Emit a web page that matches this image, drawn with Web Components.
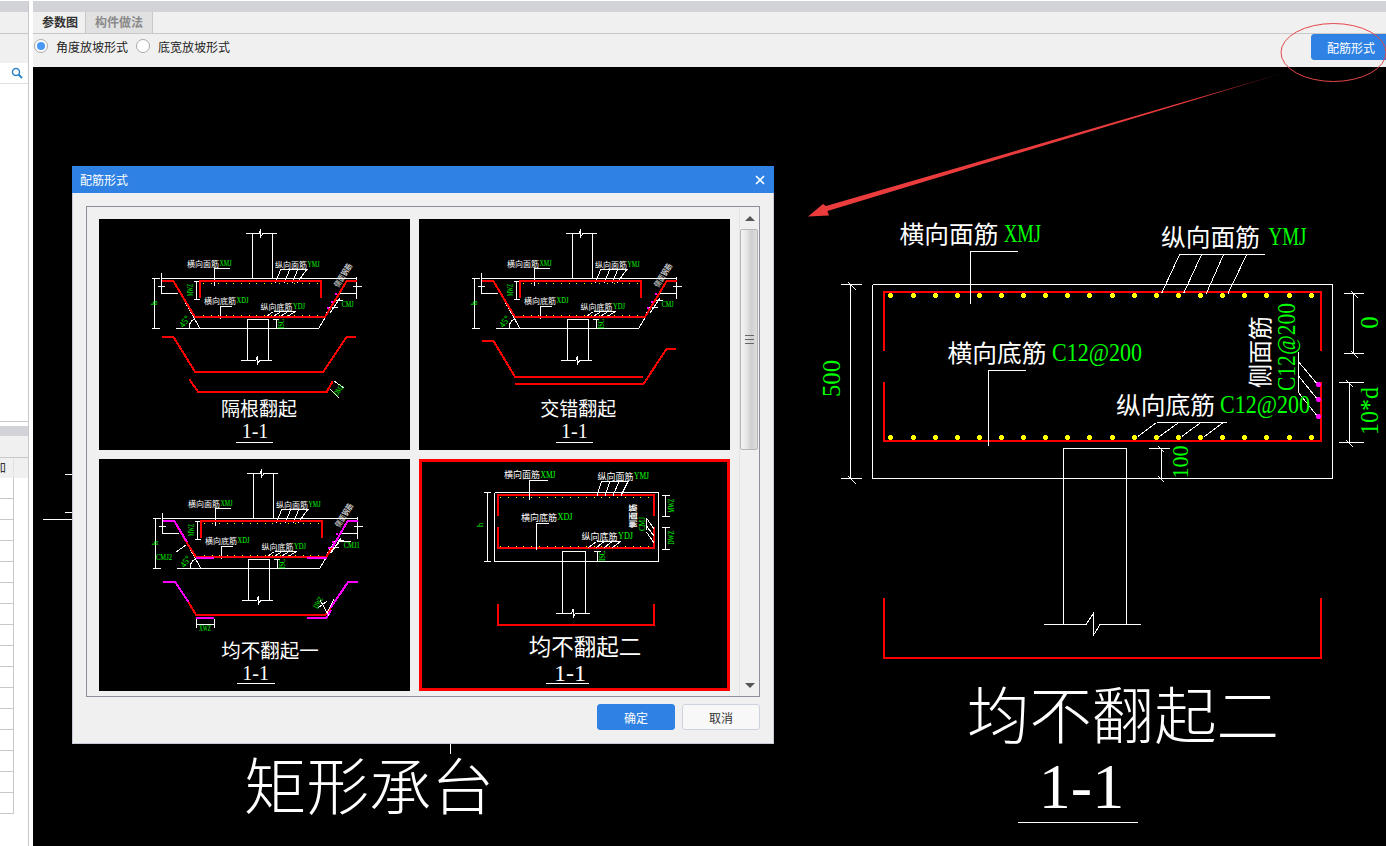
<!DOCTYPE html>
<html lang="zh">
<head>
<meta charset="utf-8">
<title>配筋形式</title>
<style>
  html, body { margin: 0; height: 846px; overflow: hidden; background: #fff; }
  body { font: 12px "Noto Sans CJK SC", sans-serif; color: #333; }
</style>
</head>
<body>
<app-shell>
  <side-panel slot="side"></side-panel>
  <work-pane slot="main">
    <rebar-dialog heading="配筋形式">
      <cad-thumb kind="alternate" heading="隔根翻起"></cad-thumb>
      <cad-thumb kind="staggered" heading="交错翻起"></cad-thumb>
      <cad-thumb kind="flat-one" heading="均不翻起一"></cad-thumb>
      <cad-thumb kind="flat-two" heading="均不翻起二" selected></cad-thumb>
    </rebar-dialog>
  </work-pane>
</app-shell>

<script>
// small svg helpers, coordinates are the page ones
const CN = '"Noto Sans CJK SC", sans-serif';
const EN = '"Liberation Serif", serif';
const WHITE = '#fff', RED = '#f00', GREEN = '#0f0', PINK = '#f0f', YELLOW = '#ff0';

function pl(points, color = WHITE, width = 1) {
  return `<polyline points="${points}" fill="none" stroke="${color}" stroke-width="${width}"/>`;
}
function txt(x, y, str, o = {}) {
  const size = o.size || 8, fill = o.fill || WHITE, family = o.family || CN;
  const fit = o.len ? `textLength="${o.len}" lengthAdjust="spacingAndGlyphs"` : '';
  const anchor = o.anchor || 'start';
  const rot = o.rot ? ` rotate(${o.rot})` : '';
  return `<text transform="translate(${x} ${y})${rot}" font-size="${size}" fill="${fill}" font-family='${family}' text-anchor="${anchor}" dominant-baseline="central" ${o.weight ? `font-weight="${o.weight}"` : ''} ${fit}>${str}</text>`;
}
function label(x, y, cn, en, size, cnW, gap, enW) {
  return txt(x, y, cn, { size, len: cnW }) +
    txt(x + cnW + gap, y, en, { size: size * 1.05, fill: GREEN, family: EN, len: enW });
}
function dots(x0, x1, step, y, color, s = 1) {
  let out = '';
  for (let x = x0; x <= x1; x += step) out += `<rect x="${x}" y="${y}" width="${s}" height="${s}" fill="${color}"/>`;
  return out;
}
// rebar mark on the big section, a small plus
function mark(x, y, color) {
  const cx = Math.round(x), cy = Math.round(y);
  return `<rect x="${cx - 2}" y="${cy - 1}" width="5" height="3" fill="${color}"/><rect x="${cx - 1}" y="${cy - 2}" width="3" height="5" fill="${color}"/>`;
}
function green(x, y, str, rot, len, size = 8) {
  return txt(x, y, str, { size, fill: GREEN, family: EN, anchor: 'middle', rot, len });
}

// the section with the sloped pit, same in the first three tiles
function pitSection(pink) {
  let s = '';
  s += pl('252,278 252,233.5') + pl('272.7,278 272.7,233.5');
  s += pl('246,233.5 259,233.5 260.5,229.5 260.5,237 263,233.5 277,233.5');
  s += pl('161.5,278.5 357,278.5');
  s += pl('173.3,281 200,328.5') + pl('176,328.5 318.7,328.5 346.7,281');
  s += pl('154.5,278.5 154.5,328.5') + pl('152,278.5 159.5,278.5') + pl('152,328.5 159.5,328.5');
  s += pl('161.5,273 161.5,293.5 178,293.5') + pl('158,286 165,286');
  s += pl('356.5,277 356.5,298.5') + pl('338,293.5 356.5,293.5') + pl('353,286 361.5,286');
  s += pl('196.5,281 196.5,299') + pl('194,281 200,281') + pl('194,299 200,299');
  s += pl('247.5,360 247.5,319.5 268.5,319.5 268.5,360');
  s += pl('241,360 256,360 257.5,356 257.5,364 260,360 272,360');
  s += pl('276,319.5 276,328.5') + pl('273,319.5 279,319.5');
  s += `<path d="M189,328.5 A11,11 0 0 1 194,319" fill="none" stroke="#fff"/>`;
  s += pl('214,286 214,268.5 230,268.5');
  s += pl('281,269 307.5,269') + pl('281,269 275,283') + pl('290,269 284,283') + pl('298,269 292,283') + pl('307,269 297,283');
  s += pl('220,318.5 220,306.5 231.5,306.5');
  s += pl('273.5,311.5 295.5,311.5') + pl('273.5,311.5 267,316') + pl('281,311.5 274,316') + pl('288,311.5 281,316') + pl('295.5,311.5 288,316');
  s += pl('343,300 335,300 326,314') + pl('340,298 330,313') + pl('338,307 328,307');
  s += pl('200,298 200,281 321,281 321,298', RED, 2);
  if (!pink) {
    s += pl('161.7,281 173.3,281 195,317 325,317 346.7,281 356.7,281', RED, 2);
  } else {
    s += pl('195,317 325,317', RED, 2);
    s += pl('173.3,281 186,303 195,317', RED, 2) + pl('161.7,281 173.3,281 186,302', PINK, 2);
    s += pl('325,317 331,308', RED, 2) + pl('331,308 346.7,281 357,281', PINK, 2);
  }
  s += dots(203, 320, 7.6, 282.5, YELLOW) + dots(203, 320, 7.6, 314.5, YELLOW);
  s += dots(335, 335, 1, 293, PINK, 2) + dots(331, 331, 1, 301, PINK, 2) + dots(327, 327, 1, 307, PINK, 2);
  s += label(187, 263.5, '横向面筋', 'XMJ', 8, 32, 0.5, 12);
  s += label(275, 264.5, '纵向面筋', 'YMJ', 8, 32, 0.5, 12);
  s += label(204, 300, '横向底筋', 'XDJ', 8, 32, 0.5, 12);
  s += label(260.5, 306, '纵向底筋', 'YDJ', 8, 32, 0.5, 12);
  s += txt(342.5, 275, '侧面钢筋', { size: 8, anchor: 'middle', rot: -58, len: 26 });
  s += green(154.5, 303, 'h', -90);
  s += green(189.5, 290, 'MWZ', -90, 12, 9);
  s += green(281.5, 324, 'ISC', -90, 10);
  s += green(184.5, 321.5, '45°', -55, 12, 9);
  return s;
}

const DRAW = {
  alternate() {
    return { box: '99 219 311 231', body: pitSection(false) +
      pl('162.3,336.7 173.3,336.7 195,371.7 323.3,371.7 346.7,336.7 356,336.7', RED, 2) +
      pl('189.3,379.3 198.3,392 326.7,392 332.7,381.3', RED, 2) +
      pl('334,381 344,388') + pl('330,389 339,398') +
      green(339, 390, 'DMZ', -55, 12, 8) +
      green(347.7, 304.7, 'CMJ', 0, 12) +
      txt(259, 407, '隔根翻起', { size: 19, anchor: 'middle' }) +
      txt(255, 431, '1-1', { size: 20, family: EN, anchor: 'middle' }) +
      pl('236,442.5 273,442.5') };
  },
  staggered() {
    return { box: '99 219 311 231', body: pitSection(false) +
      pl('162.3,340.7 173.3,340.7 195,376.7 322.7,376.7', RED, 2) +
      pl('195,383.7 323.7,383.7 346.7,348.7 355.7,348.7', RED, 2) +
      green(347.7, 304.7, 'CMJ', 0, 12) +
      txt(258.3, 407, '交错翻起', { size: 19, anchor: 'middle' }) +
      txt(254.3, 431, '1-1', { size: 20, family: EN, anchor: 'middle' }) +
      pl('236,442.5 272.7,442.5') };
  },
  flatOne() {
    return { box: '99 459 311 232', body: `<g transform="translate(1 240)">${pitSection(true)}</g>` +
      pl('196,557.5 214,557.5', PINK, 2) + pl('307.3,557.5 326.7,557.5', PINK, 2) +
      pl('163.3,581.7 175,581.7 188.3,601.7', PINK, 2) + pl('188.3,601.7 196,615 325,615 330.7,607.7', RED, 2) +
      pl('330.7,607.7 348.3,581.7 357.7,581.7', PINK, 2) +
      pl('196,617.7 214,617.7', PINK, 2) + pl('307.3,617.7 326.7,617.7 331,610', PINK, 2) +
      pl('196,624.5 214,624.5') + pl('196,619 196,628') + pl('214,619 214,628') +
      pl('320,600 329,616') + pl('318,608 327,601') + pl('327,613 334,599') +
      pl('176,552 186,545') + pl('351,541 340,541 330,553') +
      green(205, 628.5, 'XWZ', 0, 12) + green(318.3, 602.7, 'DWZ', -60, 12) +
      green(164, 557.7, 'CMJ2', 0, 16) + green(351.7, 545.7, 'CMJ1', 0, 16) +
      txt(270, 649, '均不翻起一', { size: 19.5, anchor: 'middle' }) +
      txt(255.7, 673.3, '1-1', { size: 20, family: EN, anchor: 'middle' }) +
      pl('236.7,683.5 275,683.5') };
  },
  flatTwo() {
    return { box: '419 459 311 232', body:
      pl('494.5,492.5 658.5,492.5 658.5,561.5 494.5,561.5 494.5,492.5') +
      pl('497.7,516 497.7,495 654.3,495 654.3,516', RED, 2) +
      pl('497.7,527 497.7,548 654.3,548 654.3,527', RED, 2) +
      pl('497.7,604 497.7,625 654.3,625 654.3,604', RED, 2) +
      dots(500, 654, 7.8, 496.5, YELLOW) + dots(500, 654, 7.8, 546, YELLOW) +
      pl('562.5,613.5 562.5,551.5 585.5,551.5 585.5,613.5') +
      pl('556,613.5 571.5,613.5 573,609 573,617.5 575.5,613.5 589.5,613.5') +
      pl('487.5,492.5 487.5,561.5') + pl('484,492.5 491,492.5') + pl('484,561.5 491,561.5') +
      pl('665.5,495 665.5,516') + pl('662,495 670,495') + pl('662,516 670,516') +
      pl('665.5,527 665.5,549.5') + pl('662,527 670,527') + pl('662,549.5 670,549.5') +
      pl('529,500 529,480.5 547.5,480.5') +
      pl('601.5,481.5 628.5,481.5') + pl('601.5,481.5 597,495.5') + pl('610,481.5 605,495.5') + pl('619,481.5 613,495.5') + pl('628,481.5 621,495.5') +
      pl('536.5,549.5 536.5,523.5 549,523.5') +
      pl('596.5,541.5 620.5,541.5') + pl('596.5,541.5 588,548') + pl('604,541.5 596,548') + pl('612,541.5 604,548') + pl('620.5,541.5 612,548') +
      pl('597.5,551.5 597.5,561.5') + pl('594,551.5 601,551.5') +
      pl('646.5,518 646.5,530') + pl('646.5,518 654,529') + pl('646.5,526 654,536') + pl('646.5,532 654,543') +
      label(504, 474.5, '横向面筋', 'XMJ', 9, 36, 0.5, 15) +
      label(597.5, 476, '纵向面筋', 'YMJ', 9, 36, 0.5, 15) +
      label(521, 517, '横向底筋', 'XDJ', 9, 36, 0.5, 15) +
      label(581.5, 536, '纵向底筋', 'YDJ', 9, 36, 0.5, 15) +
      txt(632.5, 516, '侧面筋', { size: 8, anchor: 'middle', rot: -90, weight: 'bold', len: 24 }) +
      green(642, 524, 'CMJ', -90, 14, 9) + green(480, 525, 'h', -90, 0, 9) +
      green(671, 505.7, 'MWZ', -90, 14, 9) + green(671, 537.7, 'DWZ', -90, 14, 9) +
      green(602.5, 556, 'ISC', -90, 10, 8) +
      txt(585, 644.5, '均不翻起二', { size: 22.5, anchor: 'middle' }) +
      txt(570, 673, '1-1', { size: 24, family: EN, anchor: 'middle' }) +
      pl('546,683.5 589,683.5') };
  }
};

// big section to the right of the dialog
function bigSheet() {
  let s = '';
  s += pl('872.5,284.5 1332.5,284.5 1332.5,478.5 872.5,478.5 872.5,284.5');
  s += pl('884,351 884,292 1321,292 1321,351', RED, 2);
  s += pl('884,382 884,441 1321,441 1321,382', RED, 2);
  s += pl('884,598 884,658 1321,658 1321,598', RED, 2);
  for (let i = 0; i < 20; i++) {
    const x = 890.4 + i * 22.12;
    s += mark(x, 294.5, YELLOW) + mark(x, 436.5, YELLOW);
  }
  s += pl('850.5,284.5 850.5,478.5') + pl('841,284.5 861.5,284.5') + pl('841,478.5 861.5,478.5') + pl('848,282 856,290') + pl('848,476 856,484');
  s += pl('1353.5,293.5 1353.5,353.5') + pl('1343.5,293.5 1364,293.5') + pl('1343.5,353.5 1364,353.5') + pl('1351,291 1358,298') + pl('1351,351 1358,358');
  s += pl('1349,382.5 1349,442.5') + pl('1339,382.5 1364,382.5') + pl('1339,442.5 1364,442.5') + pl('1346,380 1353,387') + pl('1346,440 1353,447');
  s += pl('970.5,304 970.5,251.5 1018,251.5');
  s += pl('1179.5,254.5 1265,254.5');
  [[1179.6, 1161.5], [1201.6, 1183.5], [1223.6, 1206.3], [1246.7, 1228]].forEach(([a, b]) => { s += pl(`${a},254.5 ${b},293.5`); });
  s += pl('988.5,445.5 988.5,370.5 1026,370.5');
  s += pl('1156.5,422.5 1227,422.5');
  [[1156.5, 1137.7], [1178.8, 1159.4], [1200.9, 1181.7], [1223.2, 1204.5]].forEach(([a, b]) => { s += pl(`${a},422.5 ${b},436.5`); });
  s += pl('1298.5,352 1298.5,393');
  s += pl('1298.5,361.7 1317.5,384.3') + pl('1298.5,376 1317.5,399.3') + pl('1298.5,392.7 1317.5,416.3');
  for (const y of [384.3, 399.3, 416.3]) s += mark(1317.5, y, PINK);
  s += pl('1063.5,624.5 1063.5,448.5 1126.5,448.5 1126.5,624.5');
  s += pl('1044,624.5 1086,624.5 1093.3,613.5 1093.3,635.5 1100,624.5 1141,624.5');
  s += pl('1161,448.5 1161,478.5') + pl('1149,448.5 1170,448.5') + pl('1158,446 1164,452') + pl('1158,476 1164,482');
  s += txt(899.5, 232, '横向面筋', { size: 24, len: 99 });
  s += txt(1004, 233.5, 'XMJ', { size: 26, fill: GREEN, family: EN, len: 37 });
  s += txt(1161, 235, '纵向面筋', { size: 24, len: 99 });
  s += txt(1268.5, 236.5, 'YMJ', { size: 26, fill: GREEN, family: EN, len: 38 });
  s += txt(947.5, 351, '横向底筋', { size: 24, len: 99 });
  s += txt(1052, 352.5, 'C12@200', { size: 26, fill: GREEN, family: EN, len: 90 });
  s += txt(1116, 403, '纵向底筋', { size: 24, len: 99 });
  s += txt(1220, 404.5, 'C12@200', { size: 26, fill: GREEN, family: EN, len: 90 });
  s += txt(1258, 352, '侧面筋', { size: 24, anchor: 'middle', rot: -90, len: 72 });
  s += green(1286, 347, 'C12@200', -90, 88, 26);
  s += green(831.5, 378.5, '500', -90, 37, 25);
  s += green(1369.5, 322.5, '0', -90, 0, 25);
  s += green(1369.5, 411, '10*d', -90, 48, 25);
  s += green(1180, 462, '100', -90, 33, 24);
  s += txt(967, 712, '均不翻起二', { size: 62, len: 312, weight: 300 });
  s += txt(1081.5, 786, '1-1', { size: 64, family: EN, anchor: 'middle' });
  s += pl('1018,822.5 1138,822.5');
  // bits of the other section left of the dialog
  s += pl('65,474.5 72,474.5') + pl('65,512.5 72,512.5') + pl('43,519.5 72,519.5') + pl('450.5,744 450.5,754');
  s += txt(244, 783, '矩形承台', { size: 62, len: 250, weight: 300 });
  return s;
}

class AppShell extends HTMLElement {
  constructor() {
    super();
    this.attachShadow({ mode: 'open' }).innerHTML = `
      <style>
        :host { display: grid; grid-template-columns: 29px 4px 1fr; width: 1386px; height: 846px; position: relative; overflow: hidden; padding-top: 1px; box-sizing: border-box; }
        svg { position: absolute; left: 0; top: 0; pointer-events: none; }
      </style>
      <slot name="side"></slot><div></div><slot name="main"></slot>
      <svg width="1386" height="846" viewBox="0 0 1386 846">
        <defs><linearGradient id="fade" gradientUnits="userSpaceOnUse" x1="1290" y1="71" x2="1190" y2="101">
          <stop offset="0" stop-color="#2a0808"/><stop offset="1" stop-color="#ea3b3d"/>
        </linearGradient></defs>
        <ellipse cx="1333.5" cy="52.5" rx="52.5" ry="29" fill="none" stroke="#e4474b" stroke-width="1"/>
        <polygon points="1290,71 826,206 823,204 808,216.500 829,215.500 827.500,211" fill="url(#fade)"/>
      </svg>`;
  }
}

class SidePanel extends HTMLElement {
  constructor() {
    super();
    let rows = '';
    for (let i = 0; i < 16; i++) rows += '<div class="row"><i></i></div>';
    this.attachShadow({ mode: 'open' }).innerHTML = `
      <style>
        :host { display: flex; flex-direction: column; border-right: 1px solid #c8c8c8; background: #fff; height: 845px; overflow: hidden; }
        .cap { height: 11px; background: #d2d3d8; flex: none; }
        .tabs { height: 21px; background: #f0f0f0; border-bottom: 1px solid #c8c8c8; flex: none; }
        .tools { height: 29px; background: #f0f0f0; flex: none; }
        .search { height: 20px; border-bottom: 1px solid #e0e0e0; display: flex; justify-content: flex-end; align-items: center; padding-right: 5px; flex: none; }
        .tree { height: 337px; border-bottom: 1px solid #c8c8c8; flex: none; }
        .gap { height: 4px; flex: none; }
        .tools2 { height: 21px; background: #f0f0f0; border-bottom: 1px solid #c8c8c8; flex: none; }
        .head { height: 20px; background: #f0f0f0; display: flex; flex: none; }
        .head b { width: 13px; border-right: 1px solid #e0e0e0; font-weight: 400; font-size: 12px; line-height: 18px; overflow: hidden; white-space: nowrap; color: #333; }
        .head b span { display: block; margin-left: -6px; }
        .row { height: 20px; border-bottom: 1px solid #c8c8c8; width: 14px; box-sizing: content-box; display: flex; }
        .row i { width: 13px; border-right: 1px solid #c8c8c8; }
      </style>
      <div class="cap"></div>
      <div class="tabs"></div>
      <div class="tools"></div>
      <div class="search">
        <svg width="12" height="12" viewBox="0 0 12 12"><circle cx="5" cy="5" r="3.5" fill="none" stroke="#2e86c9" stroke-width="1.500"/><path d="M7.500 7.500 L11 11" stroke="#2e86c9" stroke-width="2"/></svg>
      </div>
      <div class="tree"></div>
      <div class="gap"></div>
      <div class="cap" style="height:10px"></div>
      <div class="tools2"></div>
      <div class="head"><b><span>加</span></b></div>
      ${rows}`;
  }
}

class TabStrip extends HTMLElement {
  constructor() {
    super();
    this.attachShadow({ mode: 'open' }).innerHTML = `
      <style>
        :host { display: flex; height: 21px; background: #f0f0f0; border-bottom: 1px solid #c8c8c8; }
        span { display: block; padding: 0 0 0 9px; line-height: 20px; font-size: 12px; font-weight: 700; box-sizing: border-box; white-space: nowrap; }
        .on { width: 53px; color: #333; border-right: 1px solid #c8c8c8; }
        .off { width: 67px; color: #8a8a8a; background: #e1e1e1; border-right: 1px solid #c8c8c8; }
      </style>
      <span class="on">参数图</span><span class="off">构件做法</span>`;
  }
}

class RadioOption extends HTMLElement {
  constructor() {
    super();
    this.attachShadow({ mode: 'open' }).innerHTML = `
      <style>
        :host { display: inline-flex; align-items: center; gap: 8px; font-size: 12px; color: #222; }
        i { width: 14px; height: 14px; box-sizing: border-box; border-radius: 50%; border: 1px solid #a9a9a9; background: #fff; display: grid; place-items: center; }
        :host([checked]) i::after { content: ""; width: 8px; height: 8px; border-radius: 50%; background: #4a9af5; }
      </style>
      <i></i><slot></slot>`;
  }
}

class UiButton extends HTMLElement {
  constructor() {
    super();
    this.attachShadow({ mode: 'open' }).innerHTML = `
      <style>
        :host { display: grid; place-items: center; width: 78px; height: 26px; box-sizing: border-box; border-radius: 3px; font-size: 12px; background: #f8f8f8; border: 1px solid #cdd3de; color: #333; flex: none; }
        :host([primary]) { background: #2f82e3; border-color: #2f82e3; color: #fff; }
        :host([wide]) { width: 80px; }
      </style>
      <slot></slot>`;
  }
}

class WorkPane extends HTMLElement {
  constructor() {
    super();
    this.attachShadow({ mode: 'open' }).innerHTML = `
      <style>
        :host { display: flex; flex-direction: column; position: relative; height: 845px; overflow: hidden; }
        .cap { height: 11px; background: #d2d3d8; flex: none; }
        .tools { height: 33px; background: #f0f0f0; display: flex; align-items: center; padding-left: 1px; flex: none; position: relative; }
        radio-option { margin-top: -9px; }
        radio-option + radio-option { margin-left: 8px; }
        ui-button { position: absolute; right: -5px; top: 0; }
        cad-sheet { flex: 1; }
      </style>
      <div class="cap"></div>
      <tab-strip></tab-strip>
      <div class="tools">
        <radio-option checked>角度放坡形式</radio-option>
        <radio-option>底宽放坡形式</radio-option>
        <ui-button primary wide>配筋形式</ui-button>
      </div>
      <cad-sheet></cad-sheet>
      <slot></slot>`;
  }
}

class CadSheet extends HTMLElement {
  constructor() {
    super();
    this.attachShadow({ mode: 'open' }).innerHTML = `
      <style>
        :host { display: block; background: #000; }
        svg { display: block; }
      </style>
      <svg width="1353" height="779" viewBox="33 67 1353 779" shape-rendering="crispEdges">${bigSheet()}</svg>`;
  }
}

class CadThumb extends HTMLElement {
  constructor() {
    super();
    this.attachShadow({ mode: 'open' });
  }
  connectedCallback() {
    const names = { alternate: 'alternate', staggered: 'staggered', 'flat-one': 'flatOne', 'flat-two': 'flatTwo' };
    const d = DRAW[names[this.getAttribute('kind')]]();
    const [, , w, h] = d.box.split(' ');
    this.shadowRoot.innerHTML = `
      <style>
        :host { display: block; background: #000; position: relative; }
        :host([selected]) { outline: 3px solid #f00; outline-offset: -3px; }
        svg { display: block; }
      </style>
      <svg width="${w}" height="${h}" viewBox="${d.box}" shape-rendering="crispEdges">${d.body}</svg>`;
  }
}

class ScrollTrack extends HTMLElement {
  constructor() {
    super();
    this.attachShadow({ mode: 'open' }).innerHTML = `
      <style>
        :host { display: flex; flex-direction: column; width: 20px; box-sizing: border-box; background: #f0f0f0; border-left: 1px solid #e3e3e3; }
        .arrow { height: 22px; display: grid; place-items: center; flex: none; }
        .arrow i { width: 0; height: 0; border: 5px solid transparent; border-top: 0; border-bottom: 5px solid #555; }
        .arrow.down i { border-bottom: 0; border-top: 5px solid #555; }
        .thumb { height: 221px; margin-left: 0; width: 18px; box-sizing: border-box; border: 1px solid #b6b6b6; border-radius: 2px; background: linear-gradient(90deg, #f3f3f3 0, #e6e6e6 35%, #cfcfcf 65%, #dedede 100%); display: grid; place-items: center; flex: none; }
        .thumb b { display: block; width: 9px; height: 7px; border-top: 1px solid #666; border-bottom: 1px solid #666; position: relative; }
        .thumb b::after { content: ""; position: absolute; left: 0; right: 0; top: 3px; height: 1px; background: #666; }
        .rest { flex: 1; }
      </style>
      <div class="arrow"><i></i></div>
      <div class="thumb"><b></b></div>
      <div class="rest"></div>
      <div class="arrow down"><i></i></div>`;
  }
}

class RebarDialog extends HTMLElement {
  constructor() {
    super();
    this.attachShadow({ mode: 'open' });
  }
  connectedCallback() {
    this.shadowRoot.innerHTML = `
      <style>
        :host { display: flex; flex-direction: column; position: absolute; left: 39px; top: 165px; width: 702px; height: 578px; box-sizing: border-box; background: #f0f0f0; border: 1px solid #c6cbd6; border-top: 0; }
        header { height: 27px; margin: 0 -1px; background: #2f82e3; color: #fff; font-size: 12px; display: flex; align-items: center; justify-content: space-between; padding: 0 9px 0 8px; flex: none; }
        .frame { margin: 13px 13px 0 13px; height: 491px; box-sizing: border-box; border: 1px solid #8b8f97; display: flex; flex: none; }
        .grid { width: 652px; box-sizing: border-box; padding: 12px 0 0 12px; display: grid; grid-template-columns: 311px 311px; grid-template-rows: 231px 232px; gap: 9px; }
        scroll-track { margin-left: auto; }
        footer { display: flex; justify-content: flex-end; gap: 7px; padding: 7px 13px 0 0; }
      </style>
      <header><span>${this.getAttribute('heading')}</span>
        <svg width="10" height="10" viewBox="0 0 10 10"><path d="M1 1 L9 9 M9 1 L1 9" stroke="#fff" stroke-width="1.600"/></svg>
      </header>
      <div class="frame">
        <div class="grid"><slot></slot></div>
        <scroll-track></scroll-track>
      </div>
      <footer><ui-button primary>确定</ui-button><ui-button>取消</ui-button></footer>`;
  }
}

customElements.define('ui-button', UiButton);
customElements.define('radio-option', RadioOption);
customElements.define('tab-strip', TabStrip);
customElements.define('side-panel', SidePanel);
customElements.define('cad-sheet', CadSheet);
customElements.define('cad-thumb', CadThumb);
customElements.define('scroll-track', ScrollTrack);
customElements.define('rebar-dialog', RebarDialog);
customElements.define('work-pane', WorkPane);
customElements.define('app-shell', AppShell);
</script>
</body>
</html>
